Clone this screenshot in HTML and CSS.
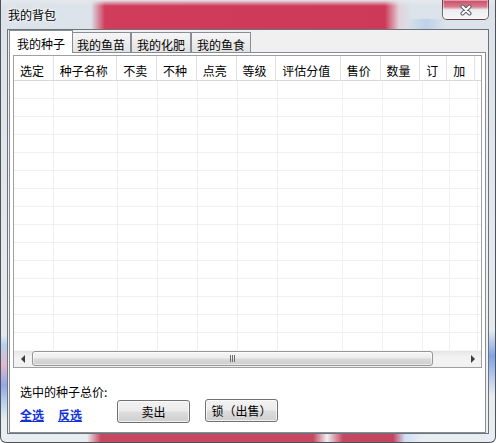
FILE: index.html
```html
<!DOCTYPE html>
<html lang="zh-CN">
<head>
<meta charset="utf-8">
<title>我的背包</title>
<link rel="stylesheet" href="styles.css">
</head>
<body>
<div class="window">
  <div class="titlebar">
    <span class="title">我的背包</span>
    <div class="close">
      <svg width="12" height="12" viewBox="0 0 12 12" aria-hidden="true">
        <path d="M2.5 2.5 L9.5 9.5 M9.5 2.5 L2.5 9.5" stroke="#5e6066" stroke-width="4" stroke-linecap="round"/>
        <path d="M2.5 2.5 L9.5 9.5 M9.5 2.5 L2.5 9.5" stroke="#ffffff" stroke-width="2" stroke-linecap="round"/>
      </svg>
    </div>
  </div>
  <div class="client">
    <div class="tabs">
      <div class="tab active">我的种子</div>
      <div class="tab">我的鱼苗</div>
      <div class="tab">我的化肥</div>
      <div class="tab">我的鱼食</div>
    </div>
    <div class="panel">
      <div class="grid">
        <div class="grid-head">
          <div class="hc col-sel">选定</div>
          <div class="hc col-name">种子名称</div>
          <div class="hc col-n">不卖</div>
          <div class="hc col-n">不种</div>
          <div class="hc col-n">点亮</div>
          <div class="hc col-n">等级</div>
          <div class="hc col-score">评估分值</div>
          <div class="hc col-n">售价</div>
          <div class="hc col-n">数量</div>
          <div class="hc col-s">订</div>
          <div class="hc col-a">加</div>
          <div class="hc col-rest"></div>
        </div>
        <div class="grid-body">
          <div class="bc col-sel"></div>
          <div class="bc col-name"></div>
          <div class="bc col-n"></div>
          <div class="bc col-n"></div>
          <div class="bc col-n"></div>
          <div class="bc col-n"></div>
          <div class="bc col-score"></div>
          <div class="bc col-n"></div>
          <div class="bc col-n"></div>
          <div class="bc col-s"></div>
          <div class="bc col-a"></div>
          <div class="bc col-rest"></div>
        </div>
        <div class="hscroll">
          <div class="sb-btn"><span class="tri-left"></span></div>
          <div class="sb-track"><div class="sb-thumb"><span class="grip"></span></div></div>
          <div class="sb-btn"><span class="tri-right"></span></div>
        </div>
      </div>
      <div class="footer">
        <div class="total">选中的种子总价:</div>
        <div class="links"><a href="#">全选</a><a href="#">反选</a></div>
        <button class="btn btn-sell" type="button">卖出</button>
        <button class="btn btn-lock" type="button">锁（出售）</button>
      </div>
    </div>
  </div>
</div>
</body>
</html>
```

FILE: styles.css
```css
* { box-sizing: border-box; }
html, body { margin: 0; padding: 0; }
body {
  width: 496px;
  height: 443px;
  overflow: hidden;
  background: #ffffff;
  font-family: "Noto Sans CJK SC", "Liberation Sans", sans-serif;
  font-size: 12px;
  line-height: 14px;
  color: #000;
}

.window {
  width: 496px;
  height: 443px;
  display: flex;
  flex-direction: column;
  padding: 0 6px 8px 6px;
  border: 1px solid rgba(45, 45, 50, 0.8);
  border-top: none;
  border-radius: 0 0 6px 6px;
  background:
    linear-gradient(to bottom, rgba(228, 233, 238, 1) 0px, rgba(228, 233, 238, 0) 6px) 0 0 / 100% 29px no-repeat,
    linear-gradient(to right, rgba(207, 58, 88, 0) 90px, #d03c5a 104px, #cd3a57 384px, rgba(230, 200, 210, 0.6) 398px, rgba(230, 235, 240, 0) 410px) 0 0 / 100% 29px no-repeat,
    linear-gradient(to right, rgba(180, 205, 235, 0) 405px, rgba(180, 205, 235, 0.8) 425px, rgba(180, 205, 235, 0) 445px) 0 19px / 100% 10px no-repeat,
    linear-gradient(to right, rgba(200, 70, 95, 0) 86px, #c54760 100px, #c54760 312px, #eef0f4 326px, #c54760 342px, #c24660 392px, #cfe0f5 404px, rgba(200, 220, 240, 0) 420px) 0 100% / 100% 9px no-repeat,
    linear-gradient(to bottom, rgba(120, 160, 230, 0) 330px, rgba(110, 150, 230, 0.85) 356px, rgba(120, 160, 230, 0) 395px) 100% 0 / 7px 100% no-repeat,
    linear-gradient(to bottom, rgba(0, 0, 0, 0) 335px, rgba(150, 190, 235, 0.6) 345px, rgba(225, 150, 180, 0.6) 365px, rgba(110, 140, 230, 0.7) 385px, rgba(150, 190, 235, 0.5) 405px, rgba(0, 0, 0, 0) 420px) 0 0 / 7px 100% no-repeat,
    linear-gradient(to bottom, #dbe2e9, #e8edf1);
}

.titlebar {
  height: 29px;
  flex: none;
  display: flex;
  justify-content: space-between;
  align-items: flex-start;
}
.title {
  margin: 8px 0 0 1px;
  text-shadow: 0 0 6px #fff, 0 0 3px #fff;
}
.close {
  width: 47px;
  height: 20px;
  display: flex;
  align-items: center;
  justify-content: center;
  border: 1px solid rgba(70, 60, 66, 0.75);
  border-top: none;
  border-radius: 0 0 5px 5px;
  background: linear-gradient(to bottom, #c84a63 0%, #d97a8e 35%, #eceef1 52%, #f4f6f8 100%);
  box-shadow: inset 0 0 0 1px rgba(255, 255, 255, 0.45);
}

.client {
  flex: 1;
  display: flex;
  flex-direction: column;
  border: 1px solid #6b737b;
  background: #f0f0f0;
  padding: 0 2px 0 1px;
}

.tabs {
  height: 22px;
  flex: none;
  display: flex;
  align-items: flex-end;
  padding-left: 2px;
}
.tab {
  width: 60px;
  height: 20px;
  padding-top: 5px;
  text-align: center;
  border: 1px solid #898c95;
  border-bottom: none;
  background: linear-gradient(to bottom, #f6f6f6, #e3e3e3);
}
.tab.active {
  position: relative;
  z-index: 1;
  width: 64px;
  height: 23px;
  margin: 0 -2px -1px -2px;
  padding-top: 6px;
  background: #ffffff;
}

.panel {
  flex: 1;
  display: flex;
  flex-direction: column;
  border: 1px solid #898c95;
  background: #ffffff;
  padding: 2px 3px 0 3px;
}

.grid {
  height: 313px;
  flex: none;
  display: flex;
  flex-direction: column;
  border: 1px solid #a0a0a0;
}
.grid-head {
  height: 25px;
  flex: none;
  display: flex;
  border-bottom: 1px solid #d8d8d8;
}
.hc {
  height: 24px;
  padding: 8px 0 0 6px;
  border-right: 1px solid #e2e2e2;
  white-space: nowrap;
  overflow: hidden;
}
.grid-body {
  flex: 1;
  display: flex;
  background: repeating-linear-gradient(to bottom, transparent 0 17px, #f0f0f0 17px 18px);
}
.bc { border-right: 1px solid #efefef; }

.col-sel { width: 40px; }
.col-name { width: 64px; }
.col-n { width: 40px; }
.col-score { width: 65px; }
.col-s { width: 27px; }
.col-a { width: 28px; }
.col-rest { flex: 1; border-right: none; }

.hscroll {
  height: 17px;
  flex: none;
  display: flex;
  background: linear-gradient(to bottom, #e6e6e6, #f3f3f3 40%, #f1f1f1);
  border-top: 1px solid #f6f6f6;
}
.sb-btn {
  width: 17px;
  display: flex;
  align-items: center;
  justify-content: center;
}
.tri-left {
  width: 0;
  height: 0;
  border-top: 4px solid transparent;
  border-bottom: 4px solid transparent;
  border-right: 4px solid #3c3c3c;
}
.tri-right {
  width: 0;
  height: 0;
  border-top: 4px solid transparent;
  border-bottom: 4px solid transparent;
  border-left: 4px solid #3c3c3c;
}
.sb-track {
  flex: 1;
  display: flex;
  padding: 0 0 1px 1px;
}
.sb-thumb {
  width: 401px;
  display: flex;
  align-items: center;
  justify-content: center;
  border: 1px solid #979797;
  border-radius: 3px;
  background: linear-gradient(to bottom, #f7f7f7 0%, #ececec 48%, #dadada 52%, #cdcdcd 100%);
  box-shadow: inset 0 0 0 1px rgba(255, 255, 255, 0.6);
}
.grip {
  width: 5px;
  height: 7px;
  background: repeating-linear-gradient(to right, #6d6d6d 0 1px, transparent 1px 2px);
}

.footer {
  flex: 1;
  display: grid;
  grid-template-columns: 97px 73px 15px 73px;
  grid-template-rows: 14px 23px;
  align-content: start;
  padding: 17px 0 0 7px;
}
.total { grid-column: 1 / 5; grid-row: 1; }
.links {
  grid-column: 1;
  grid-row: 2;
  align-self: end;
  display: flex;
  gap: 14px;
}
.links a {
  color: #1233d6;
  font-weight: bold;
  text-decoration: underline;
}
.btn {
  height: 23px;
  padding: 0;
  font: inherit;
  color: #000;
  border: 1px solid #707070;
  border-radius: 3px;
  background: linear-gradient(to bottom, #f2f2f2 0%, #ebebeb 48%, #dddddd 52%, #cfcfcf 100%);
  box-shadow: inset 0 0 0 1px rgba(255, 255, 255, 0.7);
  align-self: start;
}
.btn-sell { grid-column: 2; grid-row: 2; margin-top: 1px; }
.btn-lock { grid-column: 4; grid-row: 2; }
```
